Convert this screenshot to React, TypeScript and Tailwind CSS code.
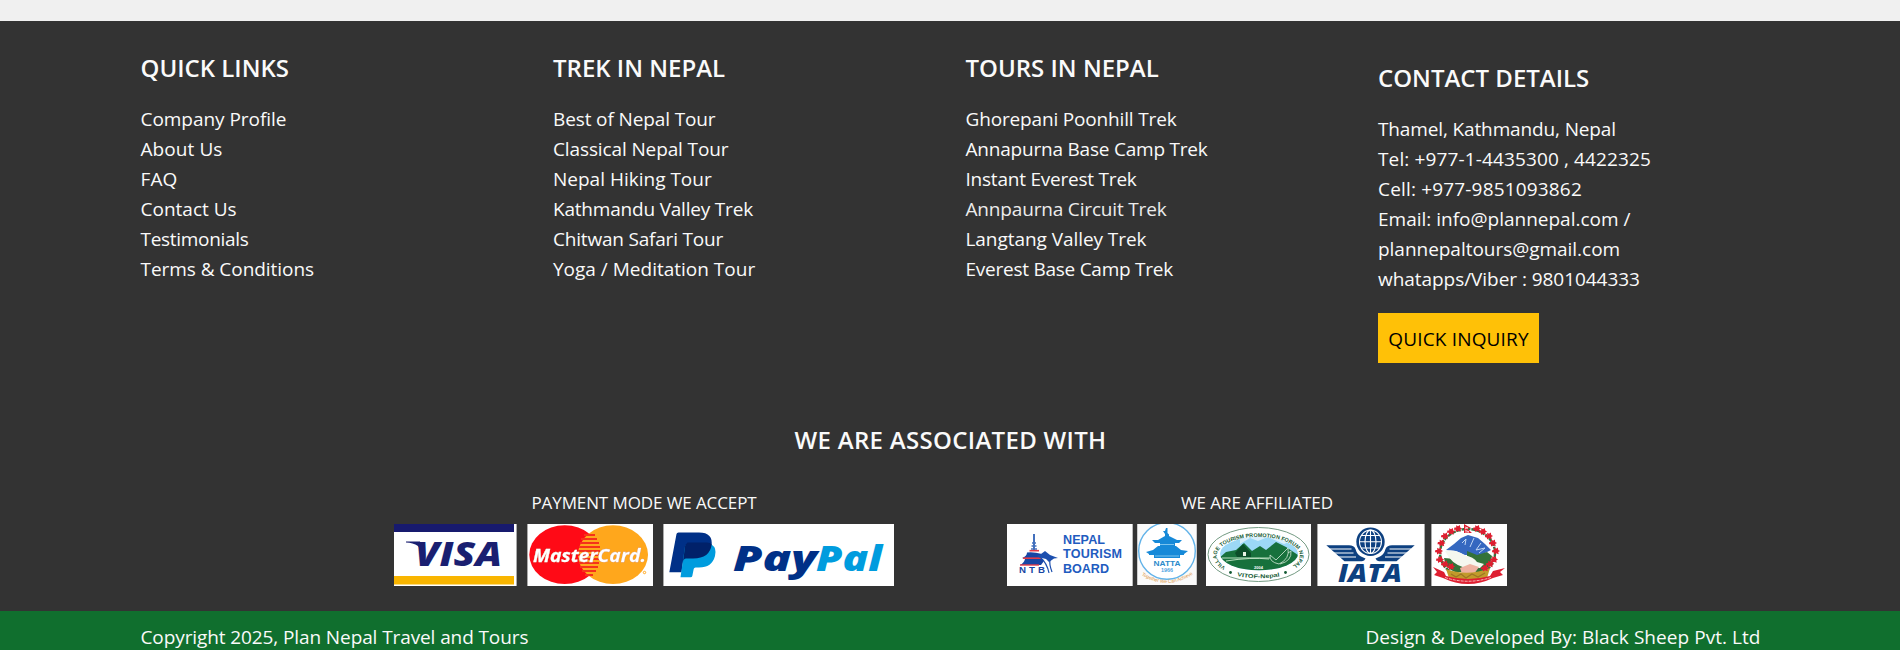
import React from 'react';

type Item = { text: string; track?: string; tone?: string };

const quickLinks: Item[] = [
  { text: 'Company Profile', track: 'tracking-[-0.04px]' },
  { text: 'About Us', track: 'tracking-[0.08px]' },
  { text: 'FAQ', track: 'tracking-[0.13px]' },
  { text: 'Contact Us' },
  { text: 'Testimonials', track: 'tracking-[-0.3px]' },
  { text: 'Terms & Conditions', track: 'tracking-[-0.05px]' },
];

const treks: Item[] = [
  { text: 'Best of Nepal Tour', track: 'tracking-[-0.12px]' },
  { text: 'Classical Nepal Tour', track: 'tracking-[-0.12px]' },
  { text: 'Nepal Hiking Tour' },
  { text: 'Kathmandu Valley Trek', track: 'tracking-[-0.2px]' },
  { text: 'Chitwan Safari Tour', track: 'tracking-[-0.2px]' },
  { text: 'Yoga / Meditation Tour' },
];

const tours: Item[] = [
  { text: 'Ghorepani Poonhill Trek', track: 'tracking-[-0.16px]' },
  { text: 'Annapurna Base Camp Trek', track: 'tracking-[-0.21px]' },
  { text: 'Instant Everest Trek', track: 'tracking-[-0.22px]' },
  { text: 'Annpaurna Circuit Trek', track: 'tracking-[-0.17px]', tone: 'text-[#ececec]' },
  { text: 'Langtang Valley Trek', track: 'tracking-[-0.06px]' },
  { text: 'Everest Base Camp Trek', track: 'tracking-[-0.25px]' },
];

const contact: Item[] = [
  { text: 'Thamel, Kathmandu, Nepal', track: 'tracking-[-0.13px]' },
  { text: 'Tel: +977-1-4435300 , 4422325', track: 'tracking-[0.13px]' },
  { text: 'Cell: +977-9851093862', track: 'tracking-[0.17px]' },
  { text: 'Email: info@plannepal.com /' },
  { text: 'plannepaltours@gmail.com', track: 'tracking-[-0.03px]' },
  { text: 'whatapps/Viber : 9801044333', track: 'tracking-[-0.05px]' },
];

function Column({ title, items, className = '', children }: { title: string; items: Item[]; className?: string; children?: React.ReactNode }) {
  return (
    <div className={className}>
      <h4 className="mb-[21px] text-2xl leading-[30px] font-semibold">{title}</h4>
      <ul>
        {items.map((i) => (
          <li key={i.text} className={`leading-[30px] whitespace-nowrap ${i.track ?? ''} ${i.tone ?? ''}`}>
            {i.text}
          </li>
        ))}
      </ul>
      {children}
    </div>
  );
}

function Visa() {
  return (
    <svg width="123" height="62" viewBox="0 0 123 62">
      <rect width="123" height="62" fill="#fff" />
      <rect width="120" height="8" fill="#171a6e" />
      <rect y="52" width="120" height="8.5" fill="#f9b500" />
      <path d="M12 17.5H26L31 32L24 22Q19 18.5 12 18.5Z" fill="#1a1f71" />
      <text x="21" y="42.3" fontFamily="Open Sans" fontSize="34" fontWeight="800" fontStyle="italic" fill="#1a1f71" textLength="87" lengthAdjust="spacingAndGlyphs">VISA</text>
      <rect x="122" width="1" height="62" fill="#aaa" />
    </svg>
  );
}

function MasterCard() {
  return (
    <svg width="126" height="62" viewBox="0 0 126 62">
      <rect width="126" height="62" fill="#fff" />
      <ellipse cx="37.7" cy="30.7" rx="35.4" ry="29.4" fill="#ff0a16" />
      <ellipse cx="86" cy="30.7" rx="35" ry="29.4" fill="#ffa71c" />
      <path d="M57 11H68M54 15H70M53 19H72M52 23H73M51 27H73M51 31H73M51 35H73M52 39H72M53 43H71M55 47H69M58 51H66" stroke="#f5321a" strokeWidth="2" />
      <text className="drop-shadow-[0.7px_0.7px_0_#b5401a]" x="6" y="38" fontFamily="Open Sans" fontSize="18.5" fontWeight="700" fontStyle="italic" fill="#fff" stroke="#fff" strokeWidth=".3" textLength="113" lengthAdjust="spacingAndGlyphs">MasterCard.</text>
      <circle cx="117.5" cy="48.5" r="1.2" fill="none" stroke="#ffa71c" />
      <rect width="1" height="62" fill="#aaa" />
    </svg>
  );
}

function PayPal() {
  return (
    <svg width="231" height="62" viewBox="0 0 231 62">
      <rect width="231" height="62" fill="#fff" />
      <path d="M13.5 10Q13.8 8.5 15.5 8.5H36Q50.5 8.5 48.5 22Q46 36 30 36H22.5Q20.5 36 20 38L18.5 48.3H6.3Z" fill="#003087" />
      <path d="M22 22.5Q22.4 20.5 24.5 20.5H48.5Q54 24 52 32Q49 43.5 36 43.5H32.5Q31 43.5 30.7 45L29.3 52Q29 53.3 27.5 53.3H17.5Z" fill="#009cde" />
      <path d="M22 22.5Q22.4 20.5 24.5 18.5H44Q47 18.5 48.7 20.3Q47 34.5 30 34.5H23Q20.5 34.5 20 38Z" fill="#012169" />
      <text x="70" y="47" fontFamily="Open Sans" fontSize="36" fontWeight="800" fontStyle="italic" fill="#003087" textLength="84" lengthAdjust="spacingAndGlyphs">Pay</text>
      <text x="153" y="47" fontFamily="Open Sans" fontSize="36" fontWeight="800" fontStyle="italic" fill="#009cde" textLength="66" lengthAdjust="spacingAndGlyphs">Pal</text>
      <rect width="1" height="62" fill="#aaa" />
    </svg>
  );
}

function TourismBoard() {
  return (
    <svg width="126" height="62" viewBox="0 0 126 62">
      <rect width="126" height="62" fill="#fff" />
      <g fontFamily="Liberation Sans" fontWeight="700" fontSize="12.6" fill="#1f5cc0">
        <text x="56" y="19.5" textLength="42">NEPAL</text>
        <text x="56" y="34.3" textLength="59">TOURISM</text>
        <text x="56" y="49" textLength="46">BOARD</text>
      </g>
      <path d="M27 10V27" stroke="#4370bd" strokeWidth="2" />
      <path d="M25 19H29M24.5 22H29.5M24 25H30" stroke="#4370bd" strokeWidth="1.6" />
      <path d="M22.5 26.7H32" stroke="#e33c4a" strokeWidth="1.6" />
      <path d="M20 28.5Q26 27.5 35 30L34 34L37 37L34 41H13Q17 39 18 35L15 34Q20 32 20 28.5Z" fill="#1745a4" />
      <path d="M16 34.2H34" stroke="#e33c4a" strokeWidth="1.6" />
      <path d="M13 41H32" stroke="#e33c4a" strokeWidth="1.4" />
      <path d="M30 32L34 30L38 27L43 31L51 34L47 34.5L42 38L39 35L35 34Q33 34 30 32Z" fill="#1c4fae" />
      <path d="M33 33Q40 39 42 49M43 36Q42 40 45 48" fill="none" stroke="#1c4fae" strokeWidth="1.2" />
      <g fontFamily="Liberation Sans" fontWeight="700" fontSize="8.3" fill="#1745a4">
        <text x="12" y="49" textLength="29" lengthAdjust="spacingAndGlyphs" letterSpacing="2.6">NTB</text>
      </g>
      <rect x="125" width="1" height="62" fill="#bbb" />
    </svg>
  );
}

function Natta() {
  return (
    <svg width="60" height="61" viewBox="0 0 60 61">
      <rect width="60" height="61" fill="#fafafa" />
      <circle cx="30" cy="27" r="28.3" fill="#fff" stroke="#62b3e9" strokeWidth="1.4" />
      <g fill="#1689d8">
        <path d="M29 4H30.5V9L32 10.5V12L40 16L45 16L42 19H18L15 16L21 16L28 12V10L26 7H28Z" />
        <path d="M23 19H38V22H23ZM21 22H39L44 26L51 27L47 30V31H12V30L9 28L16 26Z" />
        <path d="M17 31H43V34H17Z" />
      </g>
      <path d="M23 20.5H37M18 32H42" stroke="#a6dcf8" strokeWidth=".7" />
      <text x="16.5" y="42" fontFamily="Liberation Sans" fontWeight="700" fontSize="7.6" fill="#2b8acb" textLength="27" lengthAdjust="spacingAndGlyphs">NATTA</text>
      <text x="24" y="48" fontFamily="Liberation Sans" fontWeight="700" fontSize="4.6" fill="#4ca3df" textLength="12" lengthAdjust="spacingAndGlyphs">1966</text>
      <path id="natta-arc" d="M4.5 51Q30 67.5 56.5 50" fill="none" />
      <text fontFamily="Liberation Sans" fontSize="4.8" fill="#dd9440"><textPath href="#natta-arc" textLength="55">Together We Can Achieve</textPath></text>
      <path d="M.5 0V61M59.5 0V61" stroke="#ccc" />
    </svg>
  );
}

function Vitof() {
  return (
    <svg width="105" height="62" viewBox="0 0 105 62">
      <defs><clipPath id="vitof-clip"><ellipse cx="53" cy="29.7" rx="39" ry="16.6" /></clipPath></defs>
      <rect width="105" height="62" fill="#fff" />
      <ellipse cx="52.5" cy="30.5" rx="50.5" ry="27" fill="none" stroke="#749b83" />
      <g clipPath="url(#vitof-clip)">
        <rect width="105" height="62" fill="#9cd8f6" />
        <path d="M34 20L44 14L52 17L62 13L78 20L85 17V10H34Z" fill="#d9effc" />
        <path d="M12 35L20 28L30 26L38 19L46 27L54 22L60 26L70 18L80 23L92 31V50H12Z" fill="#17713c" />
        <path d="M29 29L37 20L45 29V33H31Z" fill="#0b4d29" />
        <path d="M37 28H40V32H37Z" fill="#e7f2e4" />
        <path d="M16 34H64M20 37Q45 33 63 35" stroke="#b9dfbf" strokeWidth="1" fill="none" />
        <path d="M64 31L70 36L82 24Q84 35 73 40Q63 38 64 31M82 29L85 27Q86 37 74 40" fill="none" stroke="#d6ead9" strokeWidth=".8" />
      </g>
      <text x="48" y="45" fontFamily="Liberation Sans" fontWeight="700" fontSize="4" fill="#fff">2004</text>
      <path id="vitof-top" d="M20.5 43.5A41.5 18.6 0 1 1 86.5 42" fill="none" />
      <text fontFamily="Liberation Sans" fontWeight="700" fontSize="5.4" fill="#145a34"><textPath href="#vitof-top" startOffset="1" textLength="126">VILLAGE TOURISM PROMOTION FORUM NEPAL</textPath></text>
      <path id="vitof-bottom" d="M31 52Q52 56.5 76 52" fill="none" />
      <text fontFamily="Liberation Sans" fontWeight="700" fontSize="5.6" fill="#145a34"><textPath href="#vitof-bottom" textLength="43" lengthAdjust="spacingAndGlyphs">VITOF-Nepal</textPath></text>
      <circle cx="24.5" cy="48.5" r="1.4" fill="#145a34" /><circle cx="79.5" cy="48.5" r="1.4" fill="#145a34" />
    </svg>
  );
}

function Iata() {
  const wing = 'M9.3 21.3H32Q37 21.3 38.5 25Q40 30.5 44 32.5L48.5 34.5Q47.5 37 45 37.2H27.5Z';
  const gaps = 'M13 25H34.5M17 29H36.5M21 33H39';
  return (
    <svg width="108" height="62" viewBox="0 0 108 62">
      <rect width="108" height="62" fill="#fff" />
      <circle cx="53.5" cy="17.8" r="14.2" fill="#0d4080" />
      <g fill="none" stroke="#fff" strokeWidth="1.1">
        <ellipse cx="53.5" cy="17.8" rx="11" ry="11.7" />
        <ellipse cx="53.5" cy="17.8" rx="5.5" ry="11.7" />
        <path d="M53.5 6V30M42 17.8H65M44 11.5H63M44 24H63" />
      </g>
      <path d={wing} fill="#0d4080" />
      <path d={gaps} stroke="#fff" strokeWidth="1.1" />
      <g transform="translate(107 0) scale(-1 1)">
        <path d={wing} fill="#0d4080" />
        <path d={gaps} stroke="#fff" strokeWidth="1.1" />
      </g>
      <text x="21" y="58" fontFamily="Open Sans" fontSize="24" fontWeight="800" fontStyle="italic" fill="#0d4080" textLength="64" lengthAdjust="spacingAndGlyphs">IATA</text>
      <path d="M.5 0V62M107.5 0V62" stroke="#aaa" />
    </svg>
  );
}

const blooms = [[27, 4.5], [20, 7.5], [14, 12], [10.5, 19], [8, 27], [9, 35.5], [14, 40], [20, 42.5], [46, 4.5], [52, 7.5], [58, 12], [62, 19], [65, 27], [63, 35.5], [59, 40], [54, 44]];

function Emblem() {
  return (
    <svg width="76" height="62" viewBox="0 0 76 62">
      <rect width="76" height="62" fill="#fff" />
      <ellipse cx="36.5" cy="29" rx="27.5" ry="24" fill="none" stroke="#347340" strokeWidth="2.4" strokeDasharray="4 1" />
      <ellipse cx="36.5" cy="29.5" rx="25" ry="22" fill="#fff" />
      <path d="M15 26L23 20L30 14L37 11L47 14L54 20L60 26L50 31L34 31L25 27Z" fill="#3568c0" />
      <path d="M31 19L35 15L34 21M43 14L39 23M50 19L45 26L54 24L48 29" fill="none" stroke="#c3d8f4" strokeWidth="1" />
      <path d="M36 27L46 31L56 28L61 32Q60 43 51 48H24Q14 44 13 34L36 36Z" fill="#337239" />
      <path d="M14 27Q25 25 33 31Q43 33 46 38L53 40L49 44H34Q20 40 14 27Z" fill="#f5f7ef" />
      <path d="M29 44L39 40L48 43L43 50H31Z" fill="#eeb2a1" />
      <path d="M15 45Q37 53 59 44L56 54Q37 59 18 54Z" fill="#c19b2a" />
      <path d="M20 50L25 53L30 50L35 54L41 50L47 53L54 49" fill="none" stroke="#9e7423" strokeWidth="1.2" />
      <g fill="#de1e30">
        {blooms.map(([x, y]) => (
          <path key={`${x}-${y}`} transform={`translate(${x} ${y}) scale(.9)`} d="M-4-1L-2-1L-2-3.5L0-2.5L2-4L2.5-1L4.5 0L2.5 1L3 3.5L0 2.5L-2 4L-2.5 1.5L-4.5 1.5Z" />
        ))}
        <path d="M2 43L13 48L15 52Q37 58 59 52L62 47L74 44L69 48L72 51L62 54Q37 66 12 54L3 51L6 48Z" />
        <path d="M33 0L40 4L36 4.5L41 9H33Z" />
      </g>
      <path d="M34 3L37 4L34 4.5M34 6L38 8H34" stroke="#fff" strokeWidth=".7" fill="none" />
      <path d="M14 53.5Q37 61 60 53.5" fill="none" stroke="#f5b9b9" strokeDasharray="3 1" />
      <path d="M.5 0V62" stroke="#aaa" />
    </svg>
  );
}

export default function App() {
  return (
    <div className="flex h-[650px] flex-col overflow-hidden bg-[#333333] font-['Open_Sans','Noto_Sans',sans-serif] text-[19px] text-[#fafafa]">
      <div className="h-[21px] shrink-0 bg-[#f0f0f0]" />
      <footer className="flex h-[590px] shrink-0 flex-col pt-8">
        <div className="ml-[140.5px] grid w-[1650px] grid-cols-4">
          <Column title="QUICK LINKS" items={quickLinks} />
          <Column title="TREK IN NEPAL" items={treks} />
          <Column title="TOURS IN NEPAL" items={tours} />
          <Column title="CONTACT DETAILS" items={contact} className="pt-2.5" />
        </div>
        <div className="ml-[1378px] pt-[19px]">
          <button className="flex h-[50px] w-[161px] items-center justify-center bg-[#ffc107] pt-0.5 leading-[30px] tracking-[0.16px] whitespace-nowrap text-black">
            QUICK INQUIRY
          </button>
        </div>
        <h4 className="mt-[62px] pl-px text-center text-2xl leading-[30px] font-semibold tracking-[0.31px]">WE ARE ASSOCIATED WITH</h4>
        <div className="mt-[34px] ml-[394px] flex gap-[113px] text-[17px]">
          <section className="w-[500px]">
            <p className="mb-2 text-center leading-[27px] tracking-[-0.1px]">PAYMENT MODE WE ACCEPT</p>
            <div className="flex justify-between">
              <Visa />
              <MasterCard />
              <PayPal />
            </div>
          </section>
          <section className="w-[500px]">
            <p className="mb-2 text-center leading-[27px] tracking-[-0.07px]">WE ARE AFFILIATED</p>
            <div className="flex items-start">
              <TourismBoard />
              <div className="ml-1"><Natta /></div>
              <div className="ml-[9px]"><Vitof /></div>
              <div className="ml-[6px]"><Iata /></div>
              <div className="ml-[6px]"><Emblem /></div>
            </div>
          </section>
        </div>
      </footer>
      <div className="h-[39px] shrink-0 bg-[#106f2e] pt-[11px]">
        <div className="ml-[140.5px] flex w-[1620px] justify-between leading-[30px]">
          <span className="tracking-[-0.1px]">Copyright 2025, Plan Nepal Travel and Tours</span>
          <span className="tracking-[0.05px]">Design &amp; Developed By: Black Sheep Pvt. Ltd</span>
        </div>
      </div>
    </div>
  );
}
